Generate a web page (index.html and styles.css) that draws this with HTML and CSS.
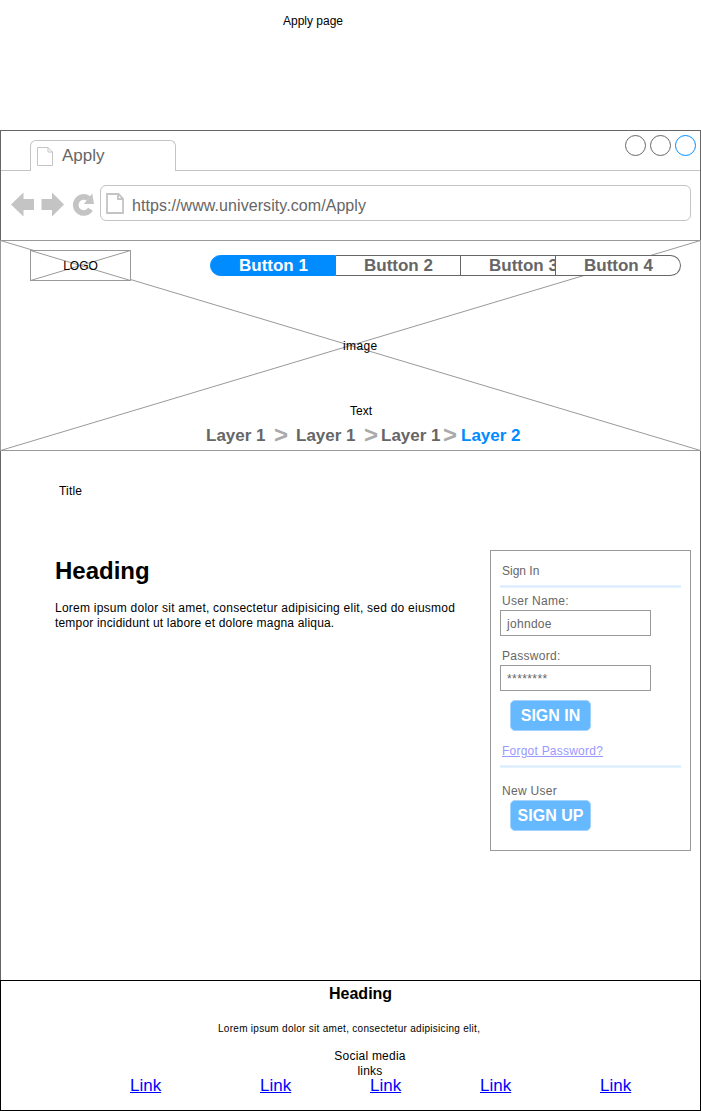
FILE: index.html
```html
<!DOCTYPE html>
<html lang="en">
<head>
<meta charset="utf-8">
<title>Apply page</title>
<link rel="stylesheet" href="styles.css">
</head>
<body>
<p class="page-name">Apply page</p>
<div class="window">
  <header class="chrome">
    <div class="tabs">
      <div class="tab">
        <svg class="tab-icon" width="17" height="20" viewBox="0 0 17 20"><path d="M.5.5h10.500l4.500 4.500v13.500h-15zM11 .5v4.500h4.500" fill="none" stroke="#c4c4c4"/></svg>
        <span>Apply</span>
      </div>
      <div class="controls"><i></i><i></i><i class="active"></i></div>
    </div>
    <div class="toolbar">
      <svg class="tools" width="84" height="26" viewBox="0 0 84 26" fill="#c4c4c4"><path d="M0 13.500L12.500 1.500v6.500h10.500v11H12.500v6.500zM53 13.500L41 1.500v6.500H30.500v11H41v6.500z"/><path d="M79.500 18.200A8 8 0 1 1 77.500 7.500" fill="none" stroke="#c4c4c4" stroke-width="5.600"/><path d="M81.200 2.500l1.800 10.500H73z"/></svg>
      <div class="address">
        <svg width="18" height="21" viewBox="0 0 18 21"><path d="M1 1h11.500L17 5.500V20H1zM12 1v5h5" fill="none" stroke="#c4c4c4" stroke-width="1.800"/></svg>
        <span>https://www.university.com/Apply</span>
      </div>
    </div>
  </header>
  <section class="hero">
    <svg class="cross" width="701" height="211" viewBox="0 0 701 211"><path d="M.5.5l700 210M.5 210.500l700-210" stroke="#999" fill="none"/></svg>
    <div class="hero-top">
      <div class="logo">
        <svg class="cross" width="101" height="31" viewBox="0 0 101 31"><path d="M.5.5l100 30M.5 30.500l100-30" stroke="#999" fill="none"/></svg>
        <span>LOGO</span>
      </div>
      <nav class="nav">
        <a class="current">Button 1</a><a>Button 2</a><a class="cut">Button 3</a><a class="last">Button 4</a>
      </nav>
    </div>
    <p class="image-label">image</p>
    <p class="hero-text">Text</p>
    <div class="crumbs"><b>Layer 1</b><i>&gt;</i><b>Layer 1</b><i>&gt;</i><b class="tight">Layer 1</b><i class="narrow">&gt;</i><b class="here">Layer 2</b></div>
  </section>
  <main class="content">
    <p class="title">Title</p>
    <div class="columns">
      <article class="article">
        <h1>Heading</h1>
        <p class="line1">Lorem ipsum dolor sit amet, consectetur adipisicing elit, sed do eiusmod</p>
        <p class="line2">tempor incididunt ut labore et dolore magna aliqua.</p>
      </article>
      <form class="login">
        <p class="login-title">Sign In</p>
        <div class="rule"></div>
        <label class="user">User Name:</label>
        <div class="field">johndoe</div>
        <label class="pass">Password:</label>
        <div class="field stars">********</div>
        <div class="button">SIGN IN</div>
        <a class="forgot">Forgot Password?</a>
        <div class="rule"></div>
        <p class="new-user">New User</p>
        <div class="button signup">SIGN UP</div>
      </form>
    </div>
  </main>
</div>
<footer class="footer">
  <h2>Heading</h2>
  <p class="small">Lorem ipsum dolor sit amet, consectetur adipisicing elit,</p>
  <p class="social">Social media<br>links</p>
  <div class="links"><a>Link</a><a>Link</a><a>Link</a><a>Link</a><a>Link</a></div>
</footer>
</body>
</html>
```
FILE: styles.css
```css
* { box-sizing: border-box; }
body { margin: 0; width: 701px; background: #fff; color: #000; font: 12px/15px "Liberation Sans", Arial, sans-serif; }
p, h1, h2 { margin: 0; }
i { font-style: normal; }
svg { display: block; flex: none; }
.page-name { height: 130px; padding: 14px 0 0 283px; }

.window { height: 850px; border: 1px solid #666; border-bottom: 0; }
.chrome { height: 109px; color: #666; }
.tabs { display: flex; height: 40px; align-items: flex-end; }
.tabs::before { content: ""; width: 29px; border-bottom: 1px solid #c4c4c4; }
.tab { display: flex; width: 146px; height: 31px; padding: 6px 0 0 6px; gap: 8px; border: 1px solid #c4c4c4; border-bottom: 0; border-radius: 6px 6px 0 0; font-size: 17px; line-height: 18px; }
.controls { display: flex; flex: 1; height: 40px; padding: 4px 4px 0 0; gap: 4px; justify-content: flex-end; border-bottom: 1px solid #c4c4c4; }
.controls i { width: 21px; height: 21px; border: 1px solid #666; border-radius: 50%; }
.controls .active { border-color: #008cff; }
.toolbar { display: flex; padding: 14px 9px 0 10px; }
.tools { margin-top: 6px; }
.address { display: flex; width: 591px; height: 36px; margin-left: 5px; padding: 7px 0 0 5px; gap: 8px; border: 1px solid #c4c4c4; border-radius: 6px; font-size: 16px; line-height: 26px; letter-spacing: .07px; }

.hero { position: relative; width: 701px; height: 211px; margin-left: -1px; padding-top: 9px; border: 1px solid #999; }
.cross { position: absolute; left: -1px; top: -1px; }
.hero-top { display: flex; height: 89px; }
.logo { position: relative; width: 101px; height: 31px; margin-left: 29px; background: #fff; border: 1px solid #999; text-align: center; line-height: 30px; }
.logo span, .image-label, .hero-text, .crumbs { position: relative; }
.nav { position: relative; display: flex; width: 471px; height: 21px; margin: 5px 0 0 79px; color: #666; font-size: 17px; font-weight: bold; line-height: 19px; }
.nav a { width: 125px; padding-left: 28px; white-space: nowrap; background: #fff; border: 1px solid #666; border-left: 0; }
.nav .current { width: 126px; padding-left: 28px; background: #008cff; color: #fff; border: 1px solid #008cff; border-radius: 11px 0 0 11px; }
.nav .cut { width: 95px; overflow: hidden; }
.nav .last { flex: 1; border-radius: 0 11px 11px 0; }
.image-label { padding-left: 342px; letter-spacing: .4px; }
.hero-text { margin-top: 50px; padding-left: 349px; }
.crumbs { display: flex; margin: 7px 0 0 205px; color: #666; font-size: 17px; line-height: 20px; }
.crumbs b { width: 68px; }
.crumbs i { width: 22px; margin-top: -1px; color: #aaa; font-size: 24px; font-weight: bold; }
.crumbs i:nth-child(4) { width: 17px; }
.crumbs .tight { width: 62px; }
.crumbs .narrow { width: 18px; }
.crumbs .here { color: #008cff; }

.title { padding: 33px 0 0 58px; letter-spacing: .2px; }
.columns { display: flex; margin-top: 51px; }
.article { width: 435px; margin: 6px 0 0 54px; }
.article h1 { margin-bottom: 15px; font-size: 24px; line-height: 30px; }
.article p { white-space: nowrap; }
.line1 { letter-spacing: .24px; }
.line2 { letter-spacing: .18px; }
.login { width: 201px; height: 301px; padding: 13px 9px 0; border: 1px solid #999; color: #666; }
.login p, .login label { display: block; padding-left: 2px; }
.login label { letter-spacing: .28px; }
.rule { height: 3px; margin-top: 6px; background: linear-gradient(#eef6ff, #d9ecff, #eef6ff); }
.user { margin-top: 6px; }
.field { width: 151px; height: 26px; margin-top: 1px; padding: 6px 6px 4px; border: 1px solid #999; letter-spacing: .3px; }
.pass { margin-top: 13px; }
.button { width: 81px; height: 31px; margin: 9px 0 0 10px; background: #66b8ff; border: 1px solid #a3d4ff; border-radius: 5px; color: #fff; font-size: 16px; font-weight: bold; line-height: 29px; text-align: center; }
.stars { letter-spacing: .4px; }
.forgot { display: block; margin-top: 13px; padding-left: 2px; color: #9999ff; letter-spacing: .23px; }
.forgot { text-decoration: underline; }
.new-user { margin-top: 16px; letter-spacing: .28px; }
.signup { margin-top: 1px; }

.footer { height: 131px; padding-top: 4px; border: 1px solid #000; }
.footer h2 { padding-left: 328px; font-size: 16px; line-height: 18px; }
.small { margin-top: 19px; padding-left: 217px; font-size: 10px; line-height: 14px; letter-spacing: .29px; white-space: nowrap; }
.social { width: 80px; margin: 13px 0 0 329px; text-align: center; letter-spacing: .22px; }
.links { display: flex; margin: -3px 0 0 129px; color: #00f; font-size: 17px; line-height: 20px; }
.links a { flex: none; width: 110px; text-decoration: underline; }
.links a:first-child { width: 130px; }
.links a:nth-child(4) { width: 120px; }
.links a:last-child { width: 40px; }
```
